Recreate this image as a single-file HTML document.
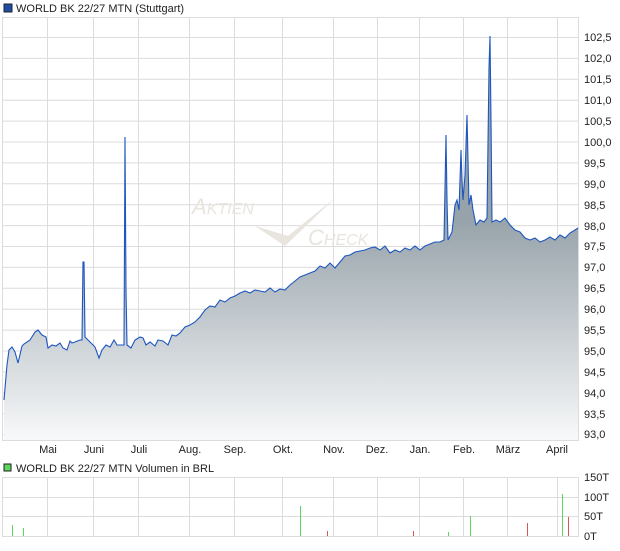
<!DOCTYPE html>
<html><head><style>
body{margin:0;background:#fff;width:620px;height:546px;overflow:hidden;font-family:"Liberation Sans",sans-serif}
svg text{font-family:"Liberation Sans",sans-serif;font-size:11px;fill:#222}
</style></head><body>
<svg width="620" height="546" xmlns="http://www.w3.org/2000/svg">
<defs>
<linearGradient id="g" gradientUnits="userSpaceOnUse" x1="0" y1="220" x2="0" y2="440">
<stop offset="0" stop-color="#97a3aa"/><stop offset="1" stop-color="#f8f9fa"/></linearGradient>
</defs>
<rect x="4" y="4" width="8" height="8" fill="#1d4fa8" stroke="#222" stroke-width="1"/>
<text x="16" y="12">WORLD BK 22/27 MTN (Stuttgart)</text>
<g stroke="#dcdcdc" stroke-width="1">
<line x1="3" y1="17.5" x2="578" y2="17.5"/>
<line x1="3" y1="37.5" x2="578" y2="37.5"/><line x1="3" y1="58.4" x2="578" y2="58.4"/><line x1="3" y1="79.3" x2="578" y2="79.3"/><line x1="3" y1="100.2" x2="578" y2="100.2"/><line x1="3" y1="121.1" x2="578" y2="121.1"/><line x1="3" y1="142" x2="578" y2="142"/><line x1="3" y1="162.9" x2="578" y2="162.9"/><line x1="3" y1="183.8" x2="578" y2="183.8"/><line x1="3" y1="204.7" x2="578" y2="204.7"/><line x1="3" y1="225.6" x2="578" y2="225.6"/><line x1="3" y1="246.5" x2="578" y2="246.5"/><line x1="3" y1="267.4" x2="578" y2="267.4"/><line x1="3" y1="288.3" x2="578" y2="288.3"/><line x1="3" y1="309.2" x2="578" y2="309.2"/><line x1="3" y1="330.1" x2="578" y2="330.1"/><line x1="3" y1="351" x2="578" y2="351"/><line x1="3" y1="371.9" x2="578" y2="371.9"/><line x1="3" y1="392.8" x2="578" y2="392.8"/><line x1="3" y1="413.7" x2="578" y2="413.7"/><line x1="3" y1="434.6" x2="578" y2="434.6"/>
<line x1="47.5" y1="17" x2="47.5" y2="440"/><line x1="93.5" y1="17" x2="93.5" y2="440"/><line x1="138.5" y1="17" x2="138.5" y2="440"/><line x1="189.5" y1="17" x2="189.5" y2="440"/><line x1="234.5" y1="17" x2="234.5" y2="440"/><line x1="282.5" y1="17" x2="282.5" y2="440"/><line x1="333.5" y1="17" x2="333.5" y2="440"/><line x1="377.5" y1="17" x2="377.5" y2="440"/><line x1="419.5" y1="17" x2="419.5" y2="440"/><line x1="463.5" y1="17" x2="463.5" y2="440"/><line x1="507.5" y1="17" x2="507.5" y2="440"/><line x1="557.5" y1="17" x2="557.5" y2="440"/>
<line x1="2.5" y1="17" x2="2.5" y2="440"/><line x1="578.5" y1="17" x2="578.5" y2="440"/><line x1="2" y1="440.5" x2="579" y2="440.5"/>
</g>
<text x="192" y="214" style="font-size:22px;fill:#e8e4de;font-style:italic">A<tspan style="font-size:16px">KTIEN</tspan></text>
<text x="308" y="245" style="font-size:22px;fill:#e8e4de;font-style:italic">C<tspan style="font-size:16px">HECK</tspan></text>
<path d="M255 226 L285 246 L335 198 L288 236 Z" fill="#e8e4de"/>
<path d="M4 400 L7 365 L9 350 L12 347 L15 352 L18 363 L22 346 L24 344 L30 340 L35 332 L38 330 L42 335 L46 337 L48 348 L52 345 L56 346 L60 343 L63 348 L67 350 L70 341 L72 343 L75 342 L80 340 L82 340 L83 262 L84 262 L85 337 L90 342 L95 347 L99 358 L102 350 L106 345 L110 347 L114 340 L117 345 L122 345 L124 345 L125 137 L126 290 L127 345 L131 348 L135 340 L140 337 L143 338 L146 345 L150 342 L155 346 L158 340 L163 341 L168 345 L172 335 L176 336 L180 333 L185 327 L190 325 L195 322 L200 317 L205 310 L210 306 L215 307 L220 300 L225 302 L230 298 L235 296 L240 293 L245 291 L250 293 L255 290 L260 291 L265 292 L270 288 L275 292 L280 289 L285 290 L290 285 L295 281 L300 277 L305 275 L310 273 L315 271 L320 266 L325 268 L330 263 L335 268 L340 262 L345 256 L350 255 L355 252 L360 251 L365 250 L370 248 L375 247 L380 250 L385 246 L390 253 L395 250 L400 252 L405 248 L410 250 L415 246 L420 250 L425 246 L430 244 L435 242 L440 242 L444 240 L446 135 L447 200 L448 240 L452 232 L455 205 L457 200 L459 210 L461 150 L462 180 L463 200 L465 175 L467 115 L468 160 L469 205 L471 195 L473 210 L476 225 L480 220 L484 222 L487 218 L489 68 L490 36 L491 120 L492 222 L496 220 L500 222 L505 218 L510 225 L515 230 L520 232 L525 238 L530 240 L535 238 L540 242 L545 240 L550 237 L555 240 L560 235 L565 238 L570 233 L575 230 L578 228 L578 440 L4 440 Z" fill="url(#g)"/>
<path d="M4 400 L7 365 L9 350 L12 347 L15 352 L18 363 L22 346 L24 344 L30 340 L35 332 L38 330 L42 335 L46 337 L48 348 L52 345 L56 346 L60 343 L63 348 L67 350 L70 341 L72 343 L75 342 L80 340 L82 340 L83 262 L84 262 L85 337 L90 342 L95 347 L99 358 L102 350 L106 345 L110 347 L114 340 L117 345 L122 345 L124 345 L125 137 L126 290 L127 345 L131 348 L135 340 L140 337 L143 338 L146 345 L150 342 L155 346 L158 340 L163 341 L168 345 L172 335 L176 336 L180 333 L185 327 L190 325 L195 322 L200 317 L205 310 L210 306 L215 307 L220 300 L225 302 L230 298 L235 296 L240 293 L245 291 L250 293 L255 290 L260 291 L265 292 L270 288 L275 292 L280 289 L285 290 L290 285 L295 281 L300 277 L305 275 L310 273 L315 271 L320 266 L325 268 L330 263 L335 268 L340 262 L345 256 L350 255 L355 252 L360 251 L365 250 L370 248 L375 247 L380 250 L385 246 L390 253 L395 250 L400 252 L405 248 L410 250 L415 246 L420 250 L425 246 L430 244 L435 242 L440 242 L444 240 L446 135 L447 200 L448 240 L452 232 L455 205 L457 200 L459 210 L461 150 L462 180 L463 200 L465 175 L467 115 L468 160 L469 205 L471 195 L473 210 L476 225 L480 220 L484 222 L487 218 L489 68 L490 36 L491 120 L492 222 L496 220 L500 222 L505 218 L510 225 L515 230 L520 232 L525 238 L530 240 L535 238 L540 242 L545 240 L550 237 L555 240 L560 235 L565 238 L570 233 L575 230 L578 228" fill="none" stroke="#1e56c0" stroke-width="1.1"/>
<g>
<text x="584" y="41">102,5</text><text x="584" y="62">102,0</text><text x="584" y="83">101,5</text><text x="584" y="104">101,0</text><text x="584" y="125">100,5</text><text x="584" y="146">100,0</text><text x="584" y="167">99,5</text><text x="584" y="188">99,0</text><text x="584" y="209">98,5</text><text x="584" y="230">98,0</text><text x="584" y="250">97,5</text><text x="584" y="271">97,0</text><text x="584" y="292">96,5</text><text x="584" y="313">96,0</text><text x="584" y="334">95,5</text><text x="584" y="355">95,0</text><text x="584" y="376">94,5</text><text x="584" y="397">94,0</text><text x="584" y="418">93,5</text><text x="584" y="438">93,0</text>
</g>
<g text-anchor="middle">
<text x="48" y="453">Mai</text><text x="94" y="453">Juni</text><text x="139" y="453">Juli</text><text x="190" y="453">Aug.</text><text x="235" y="453">Sep.</text><text x="283" y="453">Okt.</text><text x="334" y="453">Nov.</text><text x="377" y="453">Dez.</text><text x="420" y="453">Jan.</text><text x="464" y="453">Feb.</text><text x="508" y="453">März</text><text x="557" y="453">April</text>
</g>
<rect x="4" y="464" width="7" height="7" fill="#5cd65c" stroke="#222" stroke-width="1"/>
<text x="16" y="472">WORLD BK 22/27 MTN Volumen in BRL</text>
<g stroke="#dcdcdc" stroke-width="1">
<line x1="3" y1="477.5" x2="578" y2="477.5"/><line x1="3" y1="497.5" x2="578" y2="497.5"/><line x1="3" y1="516.5" x2="578" y2="516.5"/><line x1="3" y1="536.5" x2="578" y2="536.5"/>
<line x1="2.5" y1="477" x2="2.5" y2="537"/><line x1="578.5" y1="477" x2="578.5" y2="537"/>
<line x1="47.5" y1="477" x2="47.5" y2="537"/><line x1="93.5" y1="477" x2="93.5" y2="537"/><line x1="138.5" y1="477" x2="138.5" y2="537"/><line x1="189.5" y1="477" x2="189.5" y2="537"/><line x1="234.5" y1="477" x2="234.5" y2="537"/><line x1="282.5" y1="477" x2="282.5" y2="537"/><line x1="333.5" y1="477" x2="333.5" y2="537"/><line x1="377.5" y1="477" x2="377.5" y2="537"/><line x1="419.5" y1="477" x2="419.5" y2="537"/><line x1="463.5" y1="477" x2="463.5" y2="537"/><line x1="507.5" y1="477" x2="507.5" y2="537"/><line x1="557.5" y1="477" x2="557.5" y2="537"/>
</g>
<g stroke-width="1">
<line x1="12.5" y1="525" x2="12.5" y2="536" stroke="#5cd65c"/>
<line x1="23.5" y1="528" x2="23.5" y2="536" stroke="#5cd65c"/>
<line x1="300.5" y1="506" x2="300.5" y2="536" stroke="#5cd65c"/>
<line x1="327.5" y1="531" x2="327.5" y2="536" stroke="#d95757"/>
<line x1="413.5" y1="531" x2="413.5" y2="536" stroke="#d95757"/>
<line x1="448.5" y1="532" x2="448.5" y2="536" stroke="#5cd65c"/>
<line x1="470.5" y1="516" x2="470.5" y2="536" stroke="#5cd65c"/>
<line x1="527.5" y1="523" x2="527.5" y2="536" stroke="#d95757"/>
<line x1="562.5" y1="494" x2="562.5" y2="536" stroke="#5cd65c"/>
<line x1="568.5" y1="517" x2="568.5" y2="536" stroke="#d95757"/>
</g>
<text x="584" y="481">150T</text><text x="584" y="501">100T</text><text x="584" y="520">50T</text><text x="584" y="540">0T</text>
</svg>
</body></html>
